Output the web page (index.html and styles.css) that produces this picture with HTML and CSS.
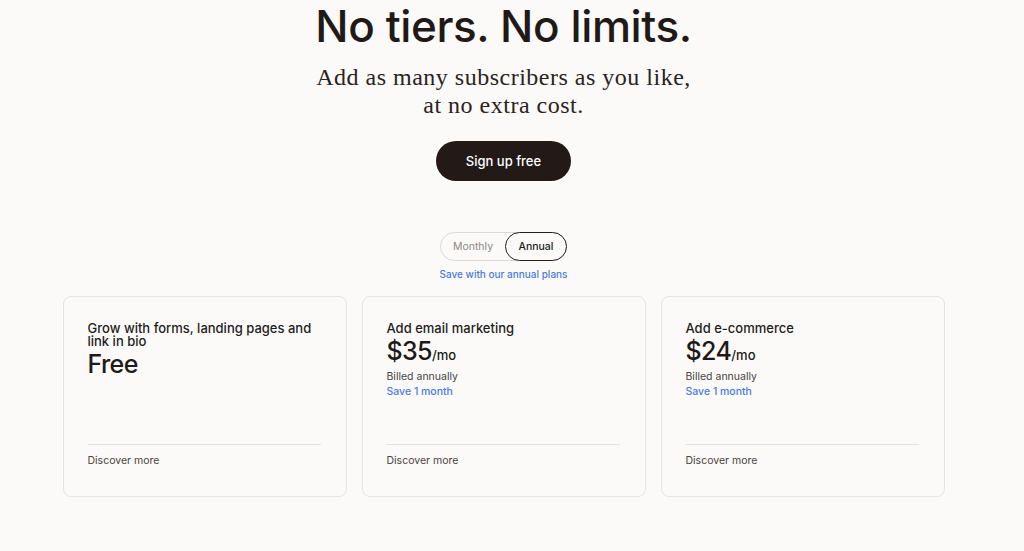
FILE: index.html
```html
<!DOCTYPE html>
<html lang="en">
<head>
<meta charset="utf-8">
<title>Pricing</title>
<link rel="stylesheet" href="styles.css">
</head>
<body>
<main class="page">
  <section class="hero">
    <h1 class="hero-title">No tiers. No limits.</h1>
    <p class="hero-sub">Add as many subscribers as you like,<br>at no extra cost.</p>
    <a class="btn-primary" href="#">Sign up free</a>
  </section>

  <section class="billing">
    <div class="toggle">
      <button class="toggle-opt">Monthly</button>
      <button class="toggle-opt is-active">Annual</button>
    </div>
    <p class="billing-note">Save with our annual plans</p>
  </section>

  <section class="plans">
    <article class="plan">
      <div class="plan-body">
        <h2 class="plan-title">Grow with forms, landing pages and link in bio</h2>
        <div class="plan-price">Free</div>
      </div>
      <div class="plan-foot">Discover more</div>
    </article>
    <article class="plan">
      <div class="plan-body">
        <h2 class="plan-title">Add email marketing</h2>
        <div class="plan-price">$35<span class="per">/mo</span></div>
        <div class="plan-billed">Billed annually</div>
        <div class="plan-save">Save 1 month</div>
      </div>
      <div class="plan-foot">Discover more</div>
    </article>
    <article class="plan">
      <div class="plan-body">
        <h2 class="plan-title">Add e-commerce</h2>
        <div class="plan-price">$24<span class="per">/mo</span></div>
        <div class="plan-billed">Billed annually</div>
        <div class="plan-save">Save 1 month</div>
      </div>
      <div class="plan-foot">Discover more</div>
    </article>
  </section>
</main>
</body>
</html>
```

FILE: styles.css
```css
* { box-sizing: border-box; }
html, body { margin: 0; padding: 0; }
body {
  background: #fbfaf8;
  color: #231d1b;
  font-family: Inter, "Liberation Sans", Arial, sans-serif;
}
.page {
  display: flex;
  flex-direction: column;
  align-items: center;
  padding-right: 17px;
}
.hero {
  display: flex;
  flex-direction: column;
  align-items: center;
  text-align: center;
}
.hero-title {
  margin: 2px 0 0;
  font-size: 44px;
  line-height: 48px;
  font-weight: 500;
  letter-spacing: -0.4px;
  color: #201917;
}
.hero-sub {
  margin: 14px 0 0;
  font-family: "Liberation Serif", "Times New Roman", serif;
  font-size: 24px;
  line-height: 27.6px;
  letter-spacing: 0.5px;
  color: #2a2321;
}
.btn-primary {
  margin-top: 22px;
  display: inline-flex;
  align-items: center;
  justify-content: center;
  width: 135px;
  height: 40px;
  border-radius: 20px;
  background: #231a18;
  color: #fff;
  font-size: 13px;
  font-weight: 500;
  text-decoration: none;
}
.billing {
  margin-top: 51px;
  display: flex;
  flex-direction: column;
  align-items: center;
}
.toggle {
  display: flex;
  width: 127px;
  height: 29px;
  border: 1px solid #dcd9d6;
  border-radius: 15px;
}
.toggle-opt {
  flex: 1;
  border: 0;
  background: transparent;
  font-family: inherit;
  font-size: 10.5px;
  color: #8d8885;
  border-radius: 15px;
  padding: 0;
  margin: -1px 0;
  cursor: pointer;
}
.toggle-opt.is-active {
  flex: 0 0 62px;
  margin-right: -1px;
  border: 1.5px solid #231d1b;
  color: #231d1b;
  font-weight: 500;
}
.billing-note {
  margin: 7px 0 0;
  font-size: 10px;
  font-weight: 500;
  color: #4a7ae0;
}
.plans {
  margin-top: 16px;
  display: grid;
  grid-template-columns: repeat(3, 284px);
  gap: 15px;
}
.plan {
  height: 201px;
  display: flex;
  flex-direction: column;
  border: 1px solid #e6e3e0;
  border-radius: 8px;
  padding: 25px 25px 28px 24px;
  background: #fbfaf8;
}
.plan-body { flex: 1; }
.plan-title {
  margin: 0;
  font-size: 13px;
  line-height: 13px;
  font-weight: 500;
  color: #231d1b;
}
.plan-price {
  margin-top: 3px;
  font-size: 25px;
  line-height: 27px;
  font-weight: 500;
  letter-spacing: -0.6px;
  color: #201917;
}
.plan-price .per {
  font-size: 13px;
  letter-spacing: 0;
}
.plan-billed {
  margin-top: 0px;
  font-size: 10.5px;
  line-height: 15px;
  color: #4a4442;
}
.plan-save {
  font-size: 10.5px;
  line-height: 16px;
  font-weight: 500;
  color: #4a7ae0;
}
.plan-foot {
  border-top: 1px solid #e3e0dd;
  padding-top: 9px;
  font-size: 10.5px;
  line-height: 14px;
  color: #4a4442;
}
```
